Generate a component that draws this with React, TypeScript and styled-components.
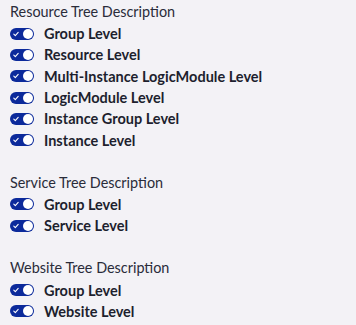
import React from "react";
import styled, { createGlobalStyle } from "styled-components";

const Global = createGlobalStyle`
  html, body { margin: 0; padding: 0; background: #f3f2f6; }
  body { font-family: Lato, "Open Sans", sans-serif; color: #1d1f2e; }
`;

const Page = styled.div`
  display: flex;
  flex-direction: column;
  gap: 22px;
  padding: 2px 10px 0 10px;
`;

const Section = styled.section`
  display: flex;
  flex-direction: column;
`;

const Heading = styled.div`
  font-size: 14.4px;
  line-height: 20px;
  font-weight: 400;
  color: #2a2c3a;
  margin-bottom: 1px;
`;

const Row = styled.label`
  display: flex;
  align-items: center;
  gap: 10px;
  height: 21.3px;
`;

const Toggle = styled.span`
  position: relative;
  width: 24px;
  height: 12px;
  border-radius: 6px;
  background: #0c2a9b;
  flex: none;
`;

const Knob = styled.span`
  position: absolute;
  right: 1px;
  top: 1px;
  width: 10px;
  height: 10px;
  border-radius: 50%;
  background: #fff;
`;

const Check = styled.svg`
  position: absolute;
  left: 3px;
  top: 3px;
  width: 6px;
  height: 6px;
`;

const Label = styled.span`
  font-size: 14.5px;
  font-weight: 700;
  color: #1d1f2e;
`;

const sections = [
  {
    title: "Resource Tree Description",
    items: [
      "Group Level",
      "Resource Level",
      "Multi-Instance LogicModule Level",
      "LogicModule Level",
      "Instance Group Level",
      "Instance Level",
    ],
  },
  { title: "Service Tree Description", items: ["Group Level", "Service Level"] },
  { title: "Website Tree Description", items: ["Group Level", "Website Level"] },
];

function Switch() {
  return (
    <Toggle>
      <Check viewBox="0 0 6 6">
        <path d="M0.8 3.2 L2.3 4.6 L5.2 1.4" stroke="#fff" strokeWidth="1.1" fill="none" strokeLinecap="round" strokeLinejoin="round" />
      </Check>
      <Knob />
    </Toggle>
  );
}

export default function App() {
  return (
    <>
      <Global />
      <Page>
        {sections.map((s) => (
          <Section key={s.title}>
            <Heading>{s.title}</Heading>
            {s.items.map((it) => (
              <Row key={it}>
                <Switch />
                <Label>{it}</Label>
              </Row>
            ))}
          </Section>
        ))}
      </Page>
    </>
  );
}
